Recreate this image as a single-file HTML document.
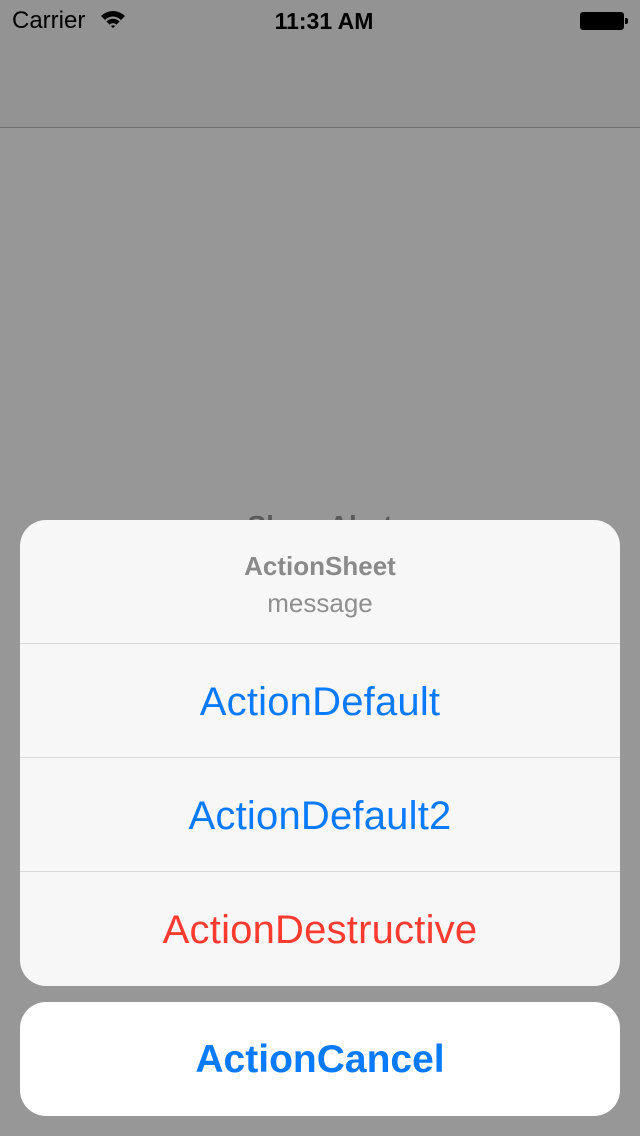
<!DOCTYPE html>
<html><head><meta charset="utf-8"><style>
*{margin:0;padding:0;box-sizing:border-box}
body{width:640px;height:1136px;background:#979797;font-family:"Liberation Sans",sans-serif;position:relative;overflow:hidden}
.sb{position:absolute;top:0;left:0;width:640px;height:40px;color:#000;font-size:24px}
.nav{position:absolute;top:0;left:0;width:640px;height:128px;background:#939393;border-bottom:1px solid #6f6f6f}
.ghost{position:absolute;top:510px;left:0;width:640px;text-align:center;font-size:28px;color:#5a5a5a;font-weight:bold}
.sheet{position:absolute;left:20px;top:520px;width:600px;height:466px;background:#f7f7f7;border-radius:26px;overflow:hidden}
.hdr{height:124px;border-bottom:1px solid #d9d9d9;text-align:center}
.t{padding-top:31px;font-size:26px;font-weight:bold;color:#8a8a8a}
.m{padding-top:6px;font-size:26px;color:#8f8f8f}
.btn{height:114px;line-height:116px;text-align:center;font-size:40px;letter-spacing:0.2px;color:#0a7aff;border-bottom:1px solid #d9d9d9}
.btn:last-child{border-bottom:none}
.cancel{position:absolute;left:20px;top:1002px;width:600px;height:114px;background:#fff;border-radius:26px;text-align:center;line-height:116px;font-size:39px;font-weight:bold;color:#0a7aff}
</style></head><body>
<div class="nav"></div>
<div class="sb">
<span style="position:absolute;left:12px;top:7px">Carrier</span>
<svg style="position:absolute;left:100px;top:10px" width="26" height="20" viewBox="0 0 26 20"><path d="M13 18 L1 6 A17 17 0 0 1 25 6 Z" fill="#000"/><path d="M13 18 L5 10 A11 11 0 0 1 21 10Z" fill="#939393" /><path d="M13 18 L6.5 11.5 A9 9 0 0 1 19.5 11.5Z" fill="#000"/><path d="M13 18 L9.5 14.5 A5 5 0 0 1 16.5 14.5Z" fill="#939393"/><path d="M13 18 L11 16 A3 3 0 0 1 15 16Z" fill="#000"/></svg>
<span style="position:absolute;left:0;width:648px;text-align:center;top:8px;font-weight:bold;font-size:23px">11:31 AM</span>
<div style="position:absolute;left:580px;top:12px;width:44px;height:18px;border:1px solid #000;border-radius:3px;background:#000"></div>
<div style="position:absolute;left:625px;top:18px;width:3px;height:6px;background:#000;border-radius:0 2px 2px 0"></div>
</div>
<div class="ghost">Show Alert</div>
<div class="sheet">
<div class="hdr"><div class="t">ActionSheet</div><div class="m">message</div></div>
<div class="btn">ActionDefault</div>
<div class="btn">ActionDefault2</div>
<div class="btn" style="color:#fb3a30">ActionDestructive</div>
</div>
<div class="cancel">ActionCancel</div>
</body></html>
